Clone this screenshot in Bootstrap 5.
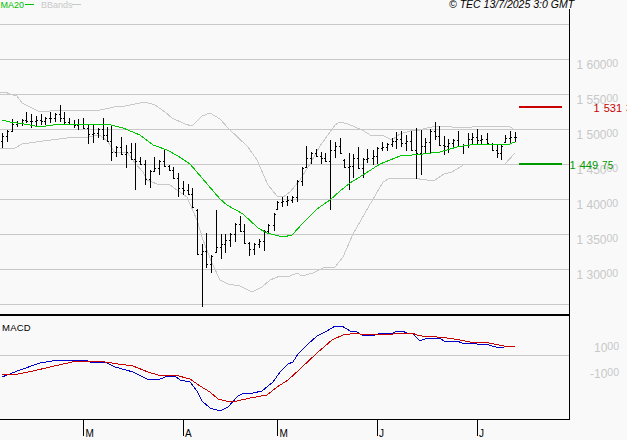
<!DOCTYPE html>
<html lang="fr">
<head>
<meta charset="utf-8">
<title>Chart</title>
<link href="https://cdn.jsdelivr.net/npm/bootstrap@5.3.0/dist/css/bootstrap.min.css" rel="stylesheet">
<style>
html,body{margin:0;background:#f9f9f9;overflow:hidden}
.chart-wrap{width:627px;height:440px;background:#f9f9f9}
.chart-svg{display:block;font-family:"Liberation Sans",Arial,sans-serif}
.chart-svg path,.chart-svg polyline,.chart-svg line{fill:none;shape-rendering:crispEdges}
.grid-line{stroke:#c8c8c8;stroke-width:1}
.axis-line{stroke:#000;stroke-width:1}
.sep-line{stroke:#000;stroke-width:2}
.band{stroke:#c8c8c8;stroke-width:1}
.ma{stroke:#00c800;stroke-width:1}
.macd-b{stroke:#0000c8;stroke-width:1}
.macd-r{stroke:#c80000;stroke-width:1}
.bars{stroke:#000;stroke-width:1}
.lvl-r{stroke:#c80000;stroke-width:2}
.lvl-g{stroke:#009900;stroke-width:2}
.ax-txt{font-size:12px;fill:#c8c8c8}
.ax-sup{font-size:10.5px;fill:#c8c8c8}
.top-ma{font-size:9px;fill:#00c000}
.top-bb{font-size:9px;fill:#c8c8c8}
.top-tec{font-size:10.5px;font-style:italic;fill:#000}
.macd-lbl{font-size:9.5px;fill:#000;letter-spacing:.25px}
.mon-lbl{font-size:10px;fill:#000}
.val-r{font-size:11px;fill:#c80000;word-spacing:1px}
.val-g{font-size:11px;fill:#009900;word-spacing:1px}
.val-g2{font-size:10px;fill:#009900}
</style>
</head>
<body>
<div class="chart-wrap position-relative overflow-hidden">
<svg class="chart-svg" width="627" height="440" viewBox="0 0 627 440" xmlns="http://www.w3.org/2000/svg">
  <path class="grid-line" d="M0 24.5H569M0 59.5H569M0 94.5H569M0 129.5H569M0 164.5H569M0 199.5H569M0 234.5H569M0 269.5H569M0 304.5H569M0 355.5H569"/>
  <polyline class="band" points="0,92 5,92 10,94 17,96 22,103 30,107 40,112 50,111 60,110 100,110 110,108 118,106 125,106 135,104 145,102 155,105 165,112 172,118 185,124 192,126 202,116 210,113 220,119 228,128 248,147 257,160 268,185 277,196 283,197 290,192 300,180 310,164 320,146 330,132 335,125 340,122 348,124 362,130 372,136 382,135 392,140 400,134 410,131 420,130 427,128 437,126 444,126 460,128 484,126 510,127 515,130"/>
  <polyline class="band" points="0,148 15,148 22,144 43,141 67,138 88,137 100,135 108,142 115,153 127,152 135,163 143,172 147,180 157,184 170,185 177,190 187,197 197,220 203,240 212,263 220,280 228,284 240,286 252,292 262,287 270,280 280,276 290,276 297,273 302,276 313,273 323,268 335,267 343,257 353,234 365,213 383,182 390,178 412,178 427,180 435,180 444,174 452,172 465,164 505,164 515,153"/>
  <path id="bars" class="bars" d=""/>
  <polyline class="ma" points="2,120 10,122 17,123 30,125 40,127 53,125 60,124 75,125 107,124 123,128 140,135 153,145 167,150 178,156 190,164 202,178 220,199 227,205 243,214 258,228 267,233 283,237 292,235 303,223 317,209 330,200 340,191 350,183 363,175 380,164 400,156 412,155 423,154 440,152 457,147 470,145 490,144 507,145 515,142"/>
  <path class="axis-line" d="M569.5 9V420M0 419.5H569M83.5 420V436M183.5 420V436M277.5 420V436M377.5 420V436M477.5 420V436"/>
  <path class="sep-line" d="M0 315H569"/>
  <polyline class="macd-b" points="2,377 20,370 40,363 58,360 85,360 90,362 105,362 115,367 133,372 147,379 160,379 168,376 175,376 180,380 190,382 197,391 202,401 210,408 220,411 228,407 238,396 242,394 253,393 262,391 273,382 280,372 288,364 293,362 298,354 308,344 317,336 327,331 335,326 342,326 350,331 357,332 362,335 373,336 380,333 393,333 397,331 402,331 407,333 412,333 417,338 420,341 427,338 440,338 444,341 457,341 462,343 470,343 477,344 489,345 499,348 509,346 515,347"/>
  <polyline class="macd-r" points="2,374 18,374 33,371 50,367 72,362 83,361 105,362 118,364 133,366 148,372 158,375 175,375 190,379 200,386 210,392 218,399 230,402 237,401 250,398 267,395 277,387 288,380 300,369 317,353 332,340 343,335 357,333 363,335 393,334 412,333 417,335 422,336 437,337 447,338 460,340 470,342 489,343 504,346 515,347"/>
  <path class="lvl-r" d="M519 107H562"/>
  <path class="lvl-g" d="M519 164H562"/>
  <path d="M25 4.5H34" stroke="#00c000" shape-rendering="crispEdges"/>
  <path d="M72 4.5H81" stroke="#c8c8c8" shape-rendering="crispEdges"/>

  <text class="top-ma" x="0.5" y="7.5">MA20</text>
  <text class="top-bb" x="41" y="7.5">BBands</text>
  <text class="top-tec" x="449" y="8">© TEC 13/7/2025 3:0 GMT</text>
  <text class="macd-lbl" x="2" y="331">MACD</text>

  <text class="ax-txt" x="576.5" y="69">1 600<tspan class="ax-sup" dy="-2">00</tspan></text>
  <text class="ax-txt" x="576.5" y="104">1 550<tspan class="ax-sup" dy="-2">00</tspan></text>
  <text class="ax-txt" x="576.5" y="139">1 500<tspan class="ax-sup" dy="-2">00</tspan></text>
  <text class="ax-txt" x="576.5" y="174">1 450<tspan class="ax-sup" dy="-2">00</tspan></text>
  <text class="ax-txt" x="576.5" y="209">1 400<tspan class="ax-sup" dy="-2">00</tspan></text>
  <text class="ax-txt" x="576.5" y="244">1 350<tspan class="ax-sup" dy="-2">00</tspan></text>
  <text class="ax-txt" x="576.5" y="279">1 300<tspan class="ax-sup" dy="-2">00</tspan></text>
  <text class="ax-txt" x="594" y="352">10<tspan class="ax-sup" dy="-2">00</tspan></text>
  <text class="ax-txt" x="590" y="378">-10<tspan class="ax-sup" dy="-2">00</tspan></text>

  <text class="val-r" x="593.5" y="112">1 531 3</text>
  <text class="val-g" x="569.5" y="169">1 449 <tspan class="val-g2">75</tspan></text>

  <text class="mon-lbl" x="85.5" y="437">M</text>
  <text class="mon-lbl" x="185" y="437">A</text>
  <text class="mon-lbl" x="279.5" y="437">M</text>
  <text class="mon-lbl" x="379" y="437">J</text>
  <text class="mon-lbl" x="479" y="437">J</text>
</svg>
</div>
<script>
var B=[[2,133,148],[7,130,142],[12,119,132],[17,121,127],[22,119,126],[26,112,123],[31,114,128],[36,116,126],[41,114,125],[45,117,125],[50,112,123],[55,113,122],[60,105,122],[64,112,124],[69,118,125],[74,120,128],[78,119,130],[83,118,129],[88,125,144],[93,125,143],[98,128,138],[103,118,140],[107,127,142],[111,125,161],[116,146,157],[121,137,155],[126,145,168],[131,143,160],[135,143,190],[140,157,165],[145,160,185],[150,170,188],[154,157,172],[159,160,175],[164,149,167],[169,165,171],[173,167,179],[178,173,197],[183,181,195],[188,184,195],[192,188,208],[197,209,255],[202,244,307],[206,233,268],[211,255,273],[216,210,253],[221,234,259],[225,234,253],[230,233,247],[235,223,242],[240,216,232],[244,224,244],[249,242,256],[254,243,255],[259,239,248],[264,230,251],[268,224,234],[274,213,231],[277,201,210],[282,197,207],[287,196,206],[292,196,203],[297,180,202],[302,167,186],[306,146,168],[311,152,164],[316,149,157],[321,152,164],[325,153,162],[330,140,210],[335,142,158],[340,138,154],[344,159,168],[349,153,190],[353,154,178],[358,147,169],[363,158,178],[367,149,163],[373,150,165],[377,147,164],[382,142,151],[387,143,151],[392,138,147],[396,132,149],[401,131,147],[406,135,151],[411,131,151],[416,128,179],[421,130,175],[425,138,153],[430,129,154],[435,122,140],[439,126,146],[444,136,155],[448,139,153],[453,139,147],[458,131,147],[463,144,154],[468,133,148],[472,133,144],[477,129,144],[481,135,144],[487,133,144],[492,143,151],[497,145,158],[501,145,160],[505,135,143],[510,131,144],[515,132,142]];
var d="",c=null;
function cl(v,a,b){return Math.max(a+1,Math.min(b-1,Math.round(v)))}
B.forEach(function(b,i){
  var x=b[0],n=B[i+1]||b,o=cl(c===null?(b[1]+b[2])/2:c,b[1],b[2]);
  c=cl((n[1]+n[2])/2,b[1],b[2]);
  d+="M"+(x+.5)+" "+b[1]+"V"+b[2]+"M"+(x-1)+" "+(o+.5)+"H"+x+"M"+(x+1)+" "+(c+.5)+"H"+(x+2);
});
document.getElementById("bars").setAttribute("d",d);
</script>
<script src="https://cdn.jsdelivr.net/npm/bootstrap@5.3.0/dist/js/bootstrap.bundle.min.js"></script>
</body>
</html>
